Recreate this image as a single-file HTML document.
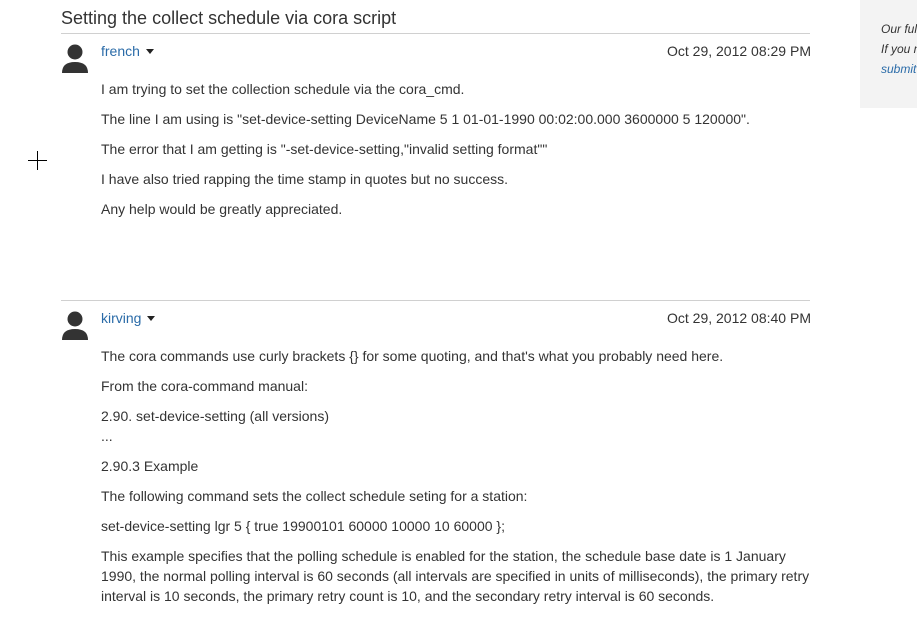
<!DOCTYPE html>
<html><head><meta charset="utf-8"><style>
body{margin:0;width:917px;height:631px;background:#fff;font-family:"Liberation Sans",Arial,sans-serif;color:#333;position:relative;overflow:hidden}
.a{position:absolute;white-space:nowrap}
.t{font-size:14px;line-height:20px}
.hr{position:absolute;left:61px;width:749px;height:1px;background:#d0d0d0}
.side{position:absolute;left:860px;top:0;width:57px;height:108px;background:#f3f3f3}
.side div{position:absolute;left:21px;font-size:12px;font-style:italic;white-space:nowrap}
.u{color:#2a6ba8}
.caret{display:inline-block;width:0;height:0;border-left:4px solid transparent;border-right:4px solid transparent;border-top:5px solid #222;margin-left:6px;vertical-align:2px}
</style></head><body>
<div class="a" style="left:61px;top:7px;font-size:18px;line-height:22px">Setting the collect schedule via cora script</div>
<div class="hr" style="top:33px"></div>
<div class="side"><div style="top:22px">Our full</div><div style="top:42px">If you n</div><div style="top:62px;color:#2a6ba8">submit</div></div>

<svg class="a" style="left:61px;top:43px" width="28" height="30"><circle cx="14" cy="9" r="7.5" fill="#333"/><path d="M1 30 Q1 19 14 19 Q27 19 27 30Z" fill="#333"/></svg>
<div class="a t u" style="left:101px;top:41px">french<span class="caret"></span></div>
<div class="a t" style="left:667px;top:41px">Oct 29, 2012 08:29 PM</div>
<div class="a t" style="left:101px;top:79px">I am trying to set the collection schedule via the cora_cmd.</div>
<div class="a t" style="left:101px;top:109px">The line I am using is "set-device-setting DeviceName 5 1 01-01-1990 00:02:00.000 3600000 5 120000".</div>
<div class="a t" style="left:101px;top:139px">The error that I am getting is "-set-device-setting,"invalid setting format""</div>
<div class="a t" style="left:101px;top:169px">I have also tried rapping the time stamp in quotes but no success.</div>
<div class="a t" style="left:101px;top:199px">Any help would be greatly appreciated.</div>

<div class="a" style="left:28px;top:160px;width:19px;height:1px;background:#000"></div>
<div class="a" style="left:37px;top:151px;width:1px;height:19px;background:#000"></div>

<div class="hr" style="top:300px"></div>
<svg class="a" style="left:61px;top:310px" width="28" height="30"><circle cx="14" cy="9" r="7.5" fill="#333"/><path d="M1 30 Q1 19 14 19 Q27 19 27 30Z" fill="#333"/></svg>
<div class="a t u" style="left:101px;top:308px">kirving<span class="caret"></span></div>
<div class="a t" style="left:667px;top:308px">Oct 29, 2012 08:40 PM</div>
<div class="a t" style="left:101px;top:346px">The cora commands use curly brackets {} for some quoting, and that's what you probably need here.</div>
<div class="a t" style="left:101px;top:376px">From the cora-command manual:</div>
<div class="a t" style="left:101px;top:406px">2.90. set-device-setting (all versions)</div>
<div class="a t" style="left:101px;top:426px">...</div>
<div class="a t" style="left:101px;top:456px">2.90.3 Example</div>
<div class="a t" style="left:101px;top:486px">The following command sets the collect schedule seting for a station:</div>
<div class="a t" style="left:101px;top:516px">set-device-setting lgr 5 { true 19900101 60000 10000 10 60000 };</div>
<div class="a t" style="left:101px;top:546px">This example specifies that the polling schedule is enabled for the station, the schedule base date is 1 January</div>
<div class="a t" style="left:101px;top:566px">1990, the normal polling interval is 60 seconds (all intervals are specified in units of milliseconds), the primary retry</div>
<div class="a t" style="left:101px;top:586px">interval is 10 seconds, the primary retry count is 10, and the secondary retry interval is 60 seconds.</div>
</body></html>
